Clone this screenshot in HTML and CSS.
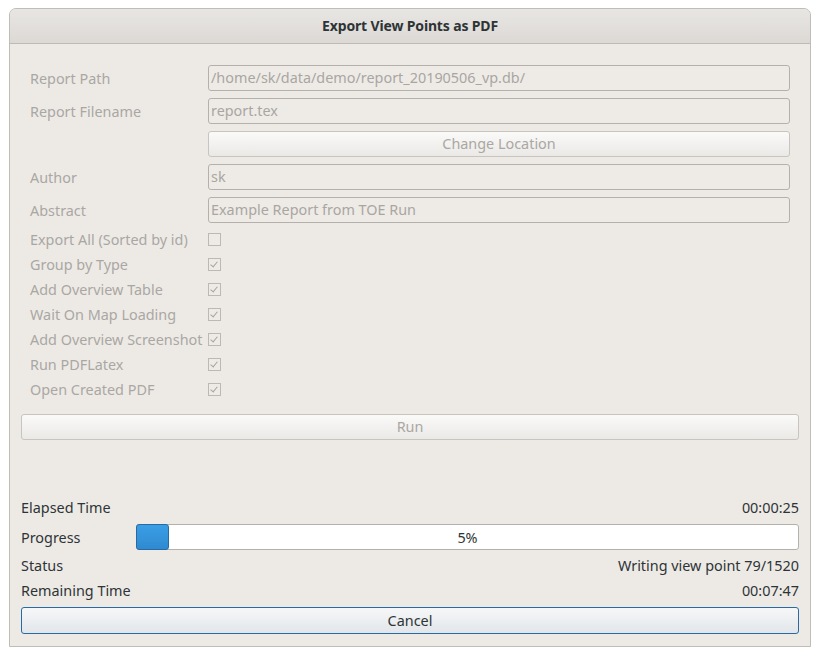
FILE: index.html
```html
<!DOCTYPE html>
<html>
<head>
<meta charset="utf-8">
<link rel="stylesheet" href="styles.css">
</head>
<body>
<div class="window">
  <div class="titlebar">Export View Points as PDF</div>
  <div class="content">
    <div class="form">
      <div class="row"><span class="label">Report Path</span><div class="field">/home/sk/data/demo/report_20190506_vp.db/</div></div>
      <div class="row"><span class="label">Report Filename</span><div class="field">report.tex</div></div>
      <div class="row"><span class="label"></span><div class="btn disabled">Change Location</div></div>
      <div class="row"><span class="label">Author</span><div class="field">sk</div></div>
      <div class="row"><span class="label">Abstract</span><div class="field">Example Report from TOE Run</div></div>
    </div>
    <div class="checks">
      <div class="crow"><span class="label">Export All (Sorted by id)</span><span class="cb"></span></div>
      <div class="crow"><span class="label">Group by Type</span><span class="cb checked"></span></div>
      <div class="crow"><span class="label">Add Overview Table</span><span class="cb checked"></span></div>
      <div class="crow"><span class="label">Wait On Map Loading</span><span class="cb checked"></span></div>
      <div class="crow"><span class="label">Add Overview Screenshot</span><span class="cb checked"></span></div>
      <div class="crow"><span class="label">Run PDFLatex</span><span class="cb checked"></span></div>
      <div class="crow"><span class="label">Open Created PDF</span><span class="cb checked"></span></div>
    </div>
    <div class="btn disabled run">Run</div>
    <div class="status">
      <div class="srow"><span>Elapsed Time</span><span>00:00:25</span></div>
      <div class="prow"><span class="plabel">Progress</span><div class="progress"><div class="pfill" style="width:5%"></div><span class="ptext">5%</span></div></div>
      <div class="srow"><span>Status</span><span>Writing view point 79/1520</span></div>
      <div class="srow"><span>Remaining Time</span><span>00:07:47</span></div>
      <div class="btn cancel">Cancel</div>
    </div>
  </div>
</div>
</body>
</html>
```
FILE: styles.css
```css
html, body { margin: 0; padding: 0; background: #ffffff; }
body {
  font-family: "Noto Sans", "Open Sans", sans-serif;
  font-size: 14.4px;
  color: #2e3436;
  padding: 8px 9px 0 9px;
  width: 802px;
}
.window {
  width: 800px;
  height: 637px;
  border: 1px solid #c0bdb8;
  border-radius: 7px 7px 0 0;
  background: #edeae6;
  overflow: hidden;
  display: flex;
  flex-direction: column;
}
.titlebar {
  height: 34px;
  line-height: 34px;
  text-align: center;
  font-weight: bold;
  font-size: 14px;
  letter-spacing: -0.15px;
  color: #2e3436;
  background: linear-gradient(#e8e6e3, #dcd9d5);
  border-bottom: 1px solid #bdbab5;
}
.content {
  flex: 1;
  padding: 21px 11px 0 11px;
  display: flex;
  flex-direction: column;
}
.form { display: flex; flex-direction: column; gap: 7px; padding-left: 9px; padding-right: 9px; }
.row { display: flex; align-items: center; height: 26px; }
.label { color: #aaa7a3; width: 178px; flex: none; white-space: nowrap; }
.field {
  flex: 1;
  height: 24px;
  line-height: 24px;
  border: 1px solid #b4b1ad;
  border-radius: 3px;
  background: #eeebe7;
  color: #a9a6a2;
  padding-left: 2px;
}
.btn {
  flex: 1;
  height: 24px;
  line-height: 24px;
  border: 1px solid #c8c4c0;
  border-radius: 3px;
  background: linear-gradient(#fafaf9, #ebe9e6);
  text-align: center;
}
.btn.disabled { color: #aaa7a3; }
.checks { display: flex; flex-direction: column; margin-top: 4px; padding-left: 9px; }
.crow { display: flex; align-items: center; height: 25px; }
.cb {
  width: 11px;
  height: 11px;
  border: 1px solid #bcb9b5;
  background: #eeebe7;
  position: relative;
}
.cb.checked::after {
  content: "";
  position: absolute;
  left: 3px;
  top: 1px;
  width: 3px;
  height: 6px;
  border-right: 1.5px solid #a6a39f;
  border-bottom: 1.5px solid #a6a39f;
  transform: rotate(40deg);
}
.run { flex: none; margin-top: 12px; }
.status { margin-top: 57px; display: flex; flex-direction: column; }
.srow { display: flex; justify-content: space-between; height: 25px; line-height: 25px; }
.srow:first-child { height: 22px; line-height: 22px; margin-bottom: 5px; }
.prow { display: flex; align-items: center; height: 26px; margin-bottom: 3px; }
.plabel { width: 115px; flex: none; }
.progress {
  flex: 1;
  height: 24px;
  border: 1px solid #b4b1ad;
  border-radius: 3px;
  background: #ffffff;
  position: relative;
  display: flex;
  align-items: center;
  justify-content: center;
}
.pfill {
  position: absolute;
  left: -1px;
  top: -1px;
  bottom: -1px;
  border: 1px solid #2a6aa3;
  border-radius: 3px;
  background: linear-gradient(#3a9ee6, #2f8ad0);
  box-sizing: border-box;
}
.ptext { position: relative; }
.cancel {
  flex: none;
  height: 25px;
  line-height: 25px;
  margin-top: 4px;
  border-color: #2a6aa3;
  background: linear-gradient(#f6f7f8, #e2e6ea);
  color: #2e3436;
}
```
